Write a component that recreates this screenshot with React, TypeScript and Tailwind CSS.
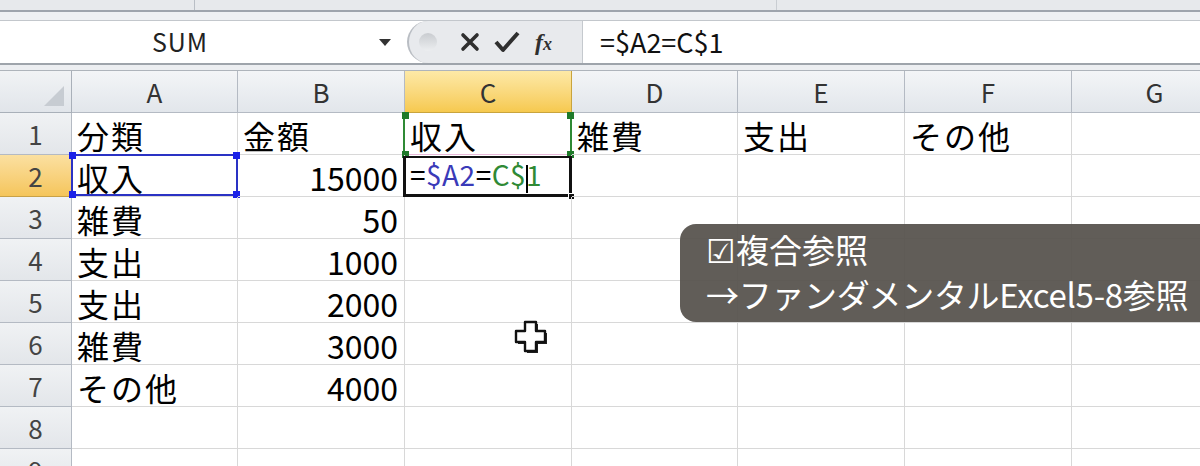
import React from 'react';

const cols = ['A', 'B', 'C', 'D', 'E', 'F', 'G'];

// cell contents by row, A..G
const rows: { a?: string; b?: string; num?: boolean; c1?: string; d?: string; e?: string; f?: string }[] = [
  { a: '分類', b: '金額', c1: '収入', d: '雑費', e: '支出', f: 'その他' },
  { a: '収入', b: '15000', num: true },
  { a: '雑費', b: '50', num: true },
  { a: '支出', b: '1000', num: true },
  { a: '支出', b: '2000', num: true },
  { a: '雑費', b: '3000', num: true },
  { a: 'その他', b: '4000', num: true },
  {},
  {},
];

const cellFont = { fontFamily: '"Noto Sans CJK JP", "DejaVu Sans", sans-serif' };

function Corner({ className }: { className: string }) {
  return <span className={`absolute w-[7px] h-[7px] ${className}`} />;
}

function Formula() {
  return (
    <span className="tracking-[0.5px]">
      =<span className="text-[#3a3ab8]">$A2</span>=<span className="text-[#2f8a35]">C$</span>
      <span className="inline-block w-[2px] h-[28px] bg-black align-middle -mr-[2px]" />
      <span className="text-[#2f8a35]">1</span>
    </span>
  );
}

export default function App() {
  return (
    <div className="relative w-[1200px] h-[466px] overflow-hidden bg-white text-black" style={cellFont}>
      {/* ribbon remnant */}
      <div className="flex h-[10px] bg-[#e7e9ec]">
        <div className="w-[195px] border-r border-[#b9bec5]" />
        <div className="w-[582px] border-r border-[#c9cdd2]" />
        <div className="flex-1" />
      </div>
      <div className="h-[2px] bg-[#9fa5ad]" />
      <div className="h-[8px] bg-[#eff1f3]" />

      {/* formula bar */}
      <div className="flex h-[45px] border-t border-[#c3c7cc] border-b-2 border-b-[#9ea4ab] bg-white">
        <div className="relative w-[407px] flex items-center">
          <span className="w-[360px] text-center text-[25px] text-[#222] tracking-[1px]">SUM</span>
          <svg width="12" height="8" viewBox="0 0 12 8" className="absolute left-[379px] top-[18px]">
            <path d="M0 0h12L6 7z" fill="#333" />
          </svg>
        </div>
        <div className="flex items-center w-[176px] h-full rounded-l-[22px] border-l-2 border-[#b9bdc3] bg-[#e8eaed] border-r border-r-[#c5c9ce]">
          <span className="ml-[10px] w-[18px] h-[18px] rounded-full bg-gradient-to-b from-[#c9ccd0] to-[#eceef0]" />
          <svg width="22" height="22" viewBox="0 0 22 22" className="ml-[22px]">
            <path d="M4 4l14 14M18 4L4 18" stroke="#2f2f2f" strokeWidth="3.6" strokeLinecap="round" />
          </svg>
          <svg width="28" height="24" viewBox="0 0 28 24" className="ml-[12px]">
            <path d="M3 12l7 8L25 3" stroke="#2f2f2f" strokeWidth="4" fill="none" strokeLinejoin="round" />
          </svg>
          <span className="ml-[14px] text-[24px] italic font-bold text-[#2f2f2f]" style={{ fontFamily: '"Liberation Serif", serif' }}>
            f<span className="text-[18px]">x</span>
          </span>
        </div>
        <div className="flex-1 flex items-center pl-[17px] text-[27px] text-[#111]">=$A2=C$1</div>
      </div>
      <div className="h-[6px] bg-[#eceef1] border-b border-[#aeb4bb]" />

      {/* sheet grid */}
      <div className="grid grid-cols-[72px_166px_167px_167px_166px_167px_167px_166px] auto-rows-[42px]">
        {/* header row */}
        <div className="relative bg-gradient-to-b from-[#f1f3f5] to-[#e1e5ea] border-r border-b border-[#a9b0b9]">
          <svg width="20" height="20" viewBox="0 0 20 20" className="absolute right-[7px] bottom-[6px]">
            <path d="M20 0v20H0z" fill="#c7ccd2" />
          </svg>
        </div>
        {cols.map((c) => (
          <div
            key={c}
            className={`flex items-center justify-center text-[26px] border-r border-b ${
              c === 'C'
                ? 'bg-gradient-to-b from-[#fde9a6] to-[#f6c94e] border-[#c9a43d] text-[#333]'
                : 'bg-gradient-to-b from-[#f3f5f7] to-[#e2e6eb] border-[#b4bac3] text-[#333]'
            }`}
          >
            {c}
          </div>
        ))}

        {rows.map((r, i) => {
          const n = i + 1;
          const base = 'relative border-r border-b border-[#d8d8d8] text-[32px] leading-none flex items-center px-[5px] pt-[2px] tracking-[2px]';
          return (
            <React.Fragment key={n}>
              <div
                className={`flex items-center justify-center text-[26px] border-r border-b ${
                  n === 2
                    ? 'bg-gradient-to-b from-[#fbe0a0] to-[#f5c55a] border-[#c8a147] text-[#444]'
                    : 'bg-gradient-to-b from-[#f0f2f4] to-[#e3e6ea] border-[#b4bac3] text-[#444]'
                }`}
              >
                {n}
              </div>
              <div className={base}>
                {r.a}
                {n === 2 && (
                  <span className="absolute -left-[1px] -top-[1px] w-[167px] h-[42px] border-2 border-[#2a32c4]">
                    <Corner className="bg-[#1b22e8] -left-[4px] -top-[4px]" />
                    <Corner className="bg-[#1b22e8] -right-[4px] -top-[4px]" />
                    <Corner className="bg-[#1b22e8] -left-[4px] -bottom-[4px]" />
                    <Corner className="bg-[#1b22e8] -right-[4px] -bottom-[4px]" />
                  </span>
                )}
              </div>
              <div className={`${base} ${r.num ? 'justify-end pr-[6px] tracking-normal' : ''}`}>{r.b}</div>
              <div className={`${base} ${n === 1 ? 'border-b-[#e8b9d9]' : ''}`}>
                {r.c1}
                {n === 1 && (
                  <span className="absolute -left-[2px] top-[1px] w-[169px] h-[41px] border-l-2 border-r-2 border-[#2f8a35]">
                    <Corner className="bg-[#1f7a2a] -left-[3px] -top-[2px]" />
                    <Corner className="bg-[#1f7a2a] -right-[4px] -top-[2px]" />
                    <Corner className="bg-[#1f7a2a] -left-[3px] -bottom-[3px]" />
                    <Corner className="bg-[#1f7a2a] -right-[4px] -bottom-[3px]" />
                  </span>
                )}
                {n === 2 && (
                  <>
                    <span className="text-[28px] tracking-normal">
                      <Formula />
                    </span>
                    <span className="absolute -left-[2px] top-[1px] w-[169px] h-[41px] border-l-[3px] border-b-[3px] border-t-2 border-r-[3px] border-[#111]">
                      <span className="absolute -right-[6px] -bottom-[6px] w-[7px] h-[7px] bg-[#111] border border-white" />
                    </span>
                  </>
                )}
              </div>
              <div className={base}>{r.d}</div>
              <div className={base}>{r.e}</div>
              <div className={base}>{r.f}</div>
              <div className={base} />
            </React.Fragment>
          );
        })}
      </div>

      {/* cell cursor */}
      <svg width="36" height="36" viewBox="0 0 36 36" className="absolute left-[513px] top-[319px]">
        <path d="M12 3h11v9h9v11h-9v9H12v-9H3V12h9z" fill="#222" transform="translate(2 2)" />
        <path d="M12 3h11v9h9v11h-9v9H12v-9H3V12h9z" fill="#fff" stroke="#111" strokeWidth="2.4" strokeLinejoin="round" />
      </svg>

      {/* caption overlay */}
      <div
        className="absolute left-[680px] top-[224px] w-[540px] h-[98px] rounded-l-[16px] bg-[#58544f]/95 text-white text-[33px] leading-[45px] pl-[26px] pt-[3px]"
        style={{ fontFamily: '"Noto Sans CJK JP", "Noto Sans", sans-serif' }}
      >
        <div>☑複合参照</div>
        <div className="tracking-[-0.3px]">→ファンダメンタルExcel5-8参照</div>
      </div>
    </div>
  );
}
